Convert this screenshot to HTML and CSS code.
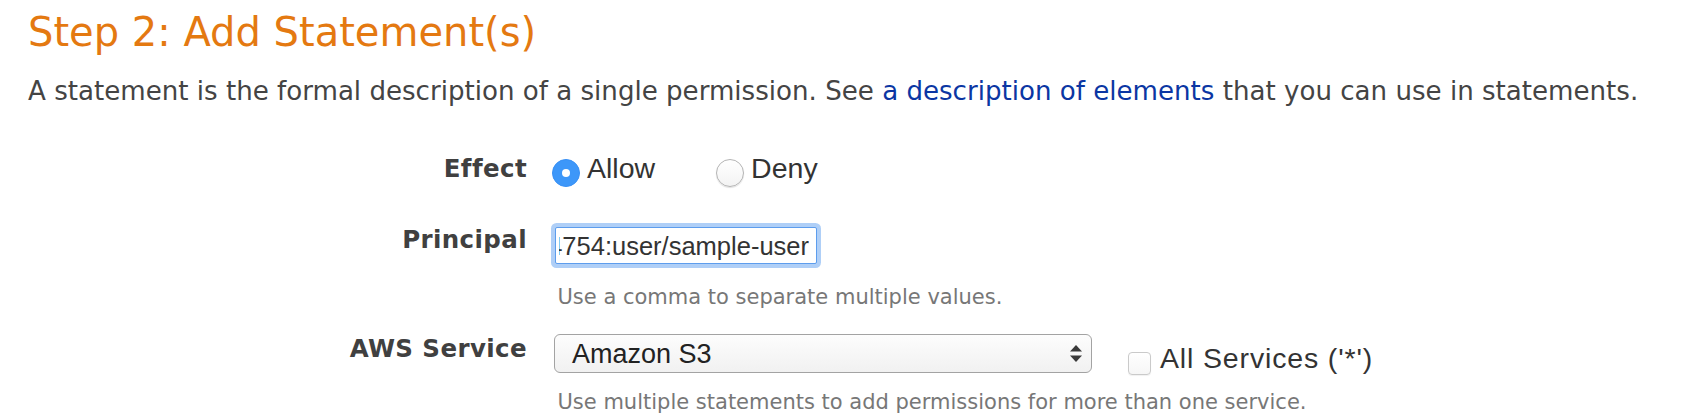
FILE: index.html
```html
<!DOCTYPE html>
<html lang="en">
<head>
<meta charset="utf-8">
<title>Step 2: Add Statement(s)</title>
<link rel="stylesheet" href="styles.css">
</head>
<body>
<div class="page">
  <h1 class="title">Step 2: Add Statement(s)</h1>
  <p class="intro">A statement is the formal description of a single permission. See <a href="#">a description of elements</a> that you can use in statements.</p>

  <div class="row row-effect">
    <div class="label">Effect</div>
    <div class="radios">
      <label class="radio"><span class="dot dot-checked"></span>Allow</label>
      <label class="radio"><span class="dot"></span>Deny</label>
    </div>
  </div>

  <div class="row row-principal">
    <div class="label">Principal</div>
    <div class="control">
      <div class="textbox"><div class="textbox-clip"><span class="textbox-value">4754:user/sample-user</span></div></div>
      <div class="help help-first">Use a comma to separate multiple values.</div>
    </div>
  </div>

  <div class="row row-service">
    <div class="label label-service">AWS Service</div>
    <div class="control">
      <div class="service-line">
        <div class="select">
          <span class="select-value">Amazon S3</span>
          <svg class="select-arrows" width="12" height="17" viewBox="0 0 12 17"><polygon points="0,6.5 6,0 12,6.5" fill="#3a3a3a"/><polygon points="0,10.5 12,10.5 6,17" fill="#3a3a3a"/></svg>
        </div>
        <label class="check"><span class="box"></span>All Services ('*')</label>
      </div>
      <div class="help help-second">Use multiple statements to add permissions for more than one service.</div>
    </div>
  </div>
</div>
</body>
</html>
```

FILE: styles.css
```css
body {
  margin: 0;
  background: #ffffff;
  font-family: "DejaVu Sans", Verdana, sans-serif;
}

.page {
  padding: 8px 0 0 28px;
}

.title {
  margin: 0;
  font-size: 40px;
  line-height: 48px;
  font-weight: normal;
  color: #e47911;
}

.intro {
  margin: 19.5px 0 0;
  font-size: 26.1px;
  line-height: 30px;
  color: #444444;
  white-space: nowrap;
}

.intro a {
  color: #0b36a3;
  text-decoration: none;
}

.row {
  display: grid;
  grid-template-columns: 499px auto;
  column-gap: 25px;
  align-items: start;
  justify-content: start;
}

.row-effect {
  margin-top: 50.5px;
}

.row-principal {
  margin-top: 45px;
}

.row-service {
  margin-top: 24px;
}

.label {
  text-align: right;
  font-weight: bold;
  font-size: 24.5px;
  line-height: 26px;
  letter-spacing: 0.4px;
  color: #404040;
}

.label-service {
  padding-top: 2px;
}

.radios {
  display: flex;
  height: 26px;
  font-family: "Liberation Sans", Arial, sans-serif;
  font-size: 28.5px;
  line-height: 24px;
  color: #333333;
}

.radio {
  display: block;
  white-space: nowrap;
}

.radio + .radio {
  margin-left: 61px;
}

.dot {
  position: relative;
  display: inline-block;
  box-sizing: border-box;
  width: 28px;
  height: 28px;
  margin-right: 7px;
  vertical-align: -9px;
  border: 1px solid #b4b4b4;
  border-radius: 50%;
  background: linear-gradient(#ffffff, #f3f3f3);
  box-shadow: 0 1px 1px rgba(0, 0, 0, 0.12);
}

.dot-checked {
  border-color: #3890f5;
  background: #3d97f9;
  box-shadow: none;
}

.dot-checked::after {
  content: "";
  position: absolute;
  left: 9px;
  top: 9px;
  width: 8px;
  height: 8px;
  border-radius: 50%;
  background: #ffffff;
}

.control {
  display: flex;
  flex-direction: column;
  align-items: flex-start;
}

.textbox {
  display: flex;
  align-items: center;
  box-sizing: border-box;
  width: 262px;
  height: 37px;
  margin-left: 3px;
  padding: 0 7px 0 3px;
  border: 1px solid #5d9ded;
  border-radius: 2px;
  box-shadow: 0 0 0 4px rgba(122, 175, 242, 0.6);
  background: #ffffff;
  font-family: "Liberation Sans", Arial, sans-serif;
  font-size: 25.5px;
  line-height: 30px;
  color: #333333;
}

.textbox-clip {
  flex: 1;
  display: flex;
  justify-content: flex-end;
  overflow: hidden;
}

.textbox-value {
  flex-shrink: 0;
  white-space: nowrap;
}

.help {
  padding-left: 5.5px;
  font-size: 21px;
  line-height: 26px;
  color: #777777;
  white-space: nowrap;
}

.help-first {
  margin-top: 20px;
}

.help-second {
  margin-top: 14px;
}

.service-line {
  display: flex;
  align-items: flex-start;
}

.select {
  display: flex;
  align-items: center;
  justify-content: space-between;
  box-sizing: border-box;
  width: 538px;
  height: 39px;
  margin-left: 2px;
  padding: 0 9px 0 17px;
  border: 1px solid #a3a3a3;
  border-radius: 6px;
  background: linear-gradient(#fdfdfd, #f1f1f1);
  font-family: "Liberation Sans", Arial, sans-serif;
  font-size: 27px;
  line-height: 30px;
  color: #222222;
}

.select-arrows {
  display: block;
}

.check {
  display: block;
  margin: 9px 0 0 36px;
  white-space: nowrap;
  font-family: "Liberation Sans", Arial, sans-serif;
  font-size: 28.5px;
  line-height: 30px;
  letter-spacing: 0.85px;
  color: #333333;
}

.box {
  display: inline-block;
  box-sizing: border-box;
  width: 23px;
  height: 23px;
  margin-right: 9px;
  vertical-align: -7px;
  border: 1px solid #cacaca;
  border-radius: 4px;
  background: linear-gradient(#ffffff, #f6f6f6);
  box-shadow: 0 1px 1px rgba(0, 0, 0, 0.06);
}
```
